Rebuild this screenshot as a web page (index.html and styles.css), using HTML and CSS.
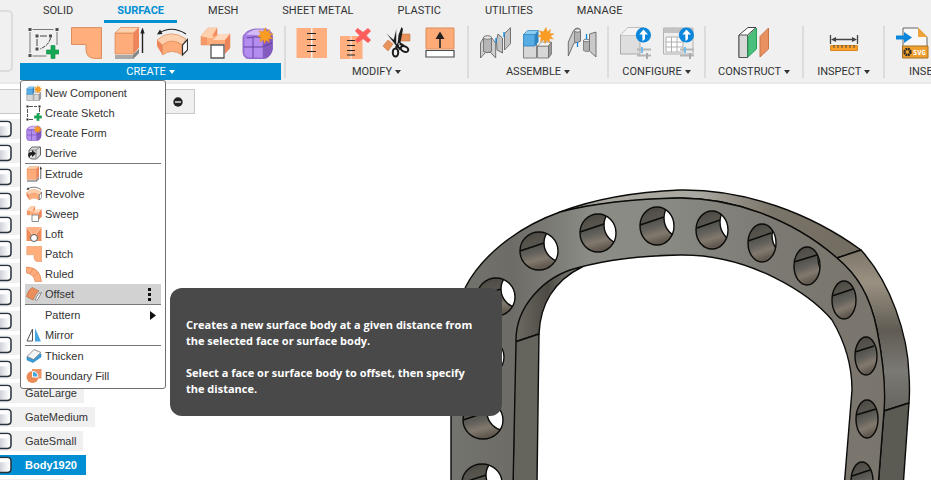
FILE: index.html
```html
<!DOCTYPE html>
<html lang="en">
<head>
<meta charset="utf-8">
<title>Surface workspace</title>
<link rel="stylesheet" href="styles.css">
</head>
<body>
<svg class="defs" aria-hidden="true">
  <symbol id="star" viewBox="0 0 16 16"><path fill="#fa9c22" stroke="#e58a17" stroke-width=".4" d="M8 0l1.3 4.4L12.6 2l-1 4 4.4.3L12.4 8.600l3 3-4.200-.5.6 4.200L8.800 12.600 7 16l-1-3.800-3.700 2 1-4.100L0 8.600l3.400-1.700L1.300 3.300l4.200 1z"/></symbol>
  <symbol id="plus" viewBox="0 0 14 14"><path fill="#17a855" stroke="#0c8c41" stroke-width=".6" d="M5 .5h4v4.500h4.500v4H9v4.500H5V9H.5V5H5z"/></symbol>
  <symbol id="sketch" viewBox="0 0 32 32">
    <path d="M5.500 2.500h21M3 5v21M30 5v13M5.500 29h14" stroke="#777" stroke-width="1" fill="none"/>
    <path d="M1.500 1h3v3h-3zM28.500 1h3v3h-3zM1.500 27h3v3h-3zM8.500 7.500h3v3h-3zM22 7.500h3v3h-3zM8.500 20.500h3v3h-3z" fill="#4c4c4c"/>
    <path d="M13 9h7M10 12v7" stroke="#444"/>
    <path d="M23.500 11c-1 5-5 9-10.500 11" stroke="#444" fill="none" stroke-dasharray="4 1"/>
    <use href="#plus" x="19" y="18" width="14" height="14"/>
  </symbol>
  <symbol id="sketch-s" viewBox="0 0 16 16">
    <path d="M3 1.500h8M1.500 4v8M13.500 3v6M3 14.500h4" stroke="#555" stroke-dasharray="4 1" fill="none"/>
    <path d="M.5.500h2v2h-2zM12.500.500h2v2h-2zM.5 13.500h2v2h-2z" fill="#222"/>
    <use href="#plus" x="8" y="8" width="8" height="8"/>
  </symbol>
  <symbol id="patch" viewBox="0 0 32 32"><path d="M1.500.600h30v30.800H24.500q-8.500-.5-8.500-9V17.500H1.500z" fill="#ffae7c" stroke="#dc8f60"/></symbol>
  <symbol id="extrude" viewBox="0 0 32 32">
    <path d="M2 28h18l6-6v4l-6 6H2z" fill="#a9a9a9"/><path d="M20 28l6-6v4l-6 6z" fill="#858585"/>
    <path d="M2 6h18.500v21H2z" fill="#ffac7b" stroke="#d78554" stroke-width=".7"/>
    <path d="M2 6L7.500.500H26L20.500 6z" fill="#ffd0ad" stroke="#d78554" stroke-width=".7"/>
    <path d="M20.500 6L26 .5v20L20.500 27z" fill="#ee845a"/>
    <path d="M29.500 26V3" stroke="#222" stroke-width="1.400"/><path d="M29.500 .5l-2.200 6h4.400z" fill="#222"/>
  </symbol>
  <symbol id="revolve" viewBox="0 0 32 32">
    <path d="M1 13Q14 1 30 12l-3 6Q16 11 6.500 18z" fill="#ffd0ad" stroke="#d78554" stroke-width=".6"/>
    <path d="M1 13v6l5.500 9V18z" fill="#ee845a"/>
    <path d="M6.500 18Q16 10 26 18v10Q16 21 6.500 28z" fill="#ffac7b" stroke="#d78554" stroke-width=".6"/>
    <path d="M26.500 18l5-5.500V23l-5 5z" fill="#fff" stroke="#333" stroke-width="1.200"/>
    <path d="M3 6Q16-2 30 7" fill="none" stroke="#222" stroke-width="1.200"/><path d="M1 7.500l3-5 2.500 4.500z" fill="#222"/>
  </symbol>
  <symbol id="sweep" viewBox="0 0 32 32">
    <path d="M2 9L9 1h9v7h7l6-1v14l-5 5V17H14V18H2z" fill="#ffac7b" stroke="#e39a6e" stroke-width=".6"/>
    <path d="M2 9L9 1h9l-5 7 2 3H8z" fill="#ffd0ad"/><path d="M14 13l6-6h11l-5 6z" fill="#ffd9bd"/>
    <path d="M26 13l5-6v14l-5 6z" fill="#ee845a"/><path d="M18 1v6l-4 3z" fill="#ee845a"/><path d="M2 10h6v8H2z" fill="#ef9160" opacity=".7"/>
    <path d="M12 18h13v13H12z" fill="#fff" stroke="#555" stroke-width="1.300"/>
  </symbol>
  <symbol id="form" viewBox="0 0 32 32">
    <path d="M1 11C1 7 6 3 13 2h10c6 1 8 5 7.500 11v9c-1 5-4 9-8 9.500H8C3 32 1 29 1 24z" fill="#a57de2" stroke="#7c55bd" stroke-width=".8"/>
    <path d="M4 8q5-5 10-5.500h8l-3 6q-8-1-15-.5z" fill="#d3bbf5"/><path d="M3 12q7-2 17-2v20H7q-4-1-4-5z" fill="#b48df0"/>
    <path d="M23 10l7-2v16q-2 6-7 7z" fill="#835abf"/><path d="M2 20h18l10-4M11 11v20M22 10v21M5 11q8-2 17-.5" stroke="#5e3899" stroke-width=".9" fill="none"/>
    <use href="#star" x="15.500" y="0" width="16" height="17"/>
  </symbol>
  <symbol id="stitch" viewBox="0 0 32 32"><path d="M.5 1h14.500v30H.5zM16.500 1H31v30H16.500z" fill="#ffae80"/><path d="M11 6.500h9M11 12.500h9M11 18.500h9M11 24.500h9" stroke="#222" stroke-width="1.200"/></symbol>
  <symbol id="unstitch" viewBox="0 0 32 32"><path d="M1 9h10.500v23H1zM12.500 9h11v23h-11z" fill="#ffae80"/><path d="M8 13.500h8M8 18.500h8M8 23.500h8M8 28h8" stroke="#222" stroke-width="1.200"/><path d="M18.500 1L24 5l5-4 3 3-4.500 4.500L32 13l-3 3-5-4-5.500 4-2.500-3 4.500-4.500L16 4z" fill="#fc5e5e"/></symbol>
  <symbol id="trim" viewBox="0 0 32 32">
    <path d="M19 7h9v7h-9zM6 13l5 4-5 7-5-5z" fill="#e8925c" stroke="#c97844" stroke-width=".6"/>
    <path d="M14.500.500v16l5 5-2 2L3.500 5.500l8 7z" fill="#1d1d1d" stroke="#fff" stroke-width=".5"/><path d="M15.500 18L16.500 8l3-8 1.500 2-3 16z" fill="#1d1d1d"/>
    <ellipse cx="13.500" cy="25.500" rx="2.700" ry="4" fill="none" stroke="#1d1d1d" stroke-width="2"/><ellipse cx="22.500" cy="22" rx="4" ry="2.700" fill="none" stroke="#1d1d1d" stroke-width="2" transform="rotate(25 22.500 22)"/>
    <path d="M14 21l3-5 5 3" stroke="#1d1d1d" stroke-width="2.500" fill="none"/><circle cx="17" cy="17" r=".8" fill="#fff"/>
  </symbol>
  <symbol id="extend" viewBox="0 0 32 32"><path d="M1 1h28v21H1z" fill="#ffab77" stroke="#dc8d5c"/><path d="M1 23.500h28V30H1z" fill="#fff" stroke="#4a4a4a" stroke-width="1.200"/><path d="M15 21V9" stroke="#222" stroke-width="1.600"/><path d="M15 4.500L10.500 12h9z" fill="#222"/></symbol>
  <symbol id="parts" viewBox="0 0 32 32">
    <path d="M25.500 6.500L31.500.700v16L25.500 23z" fill="#c3c3c3" stroke="#666" stroke-width=".9"/>
    <path d="M17.500 13l1.500-6 4.500 4v15l-5.500-3z" fill="#c3c3c3" stroke="#666" stroke-width=".9"/>
    <path d="M1.500 31V16L5 10q3.500-2 7 0l4.700 6v15l-5-5.500H6.500z" fill="#cfcfcf" stroke="#666" stroke-width=".9"/>
    <path d="M4.500 10.500h8v14q-4 2.500-8 0z" fill="#b5b5b5" stroke="#666" stroke-width=".8"/><ellipse cx="8.500" cy="10.500" rx="4" ry="1.800" fill="#e6e6e6" stroke="#666" stroke-width=".8"/>
    <path d="M17 11v5M25 5v5" stroke="#0989dd" stroke-width="1.300"/>
  </symbol>
  <symbol id="component" viewBox="0 0 32 32">
    <path d="M1.500 17h13v14h-13zM15.500 19h11v12h-11z" fill="#d7d7d7" stroke="#777" stroke-width=".9"/><path d="M15.500 19l4-4h10l-3 4z" fill="#f4f4f4" stroke="#777" stroke-width=".7"/><path d="M26.500 19l3-4v12l-3 4z" fill="#999" stroke="#666" stroke-width=".7"/>
    <path d="M1.500 7.500h11.500V19H1.500z" fill="#58ace4" stroke="#2c7fb9" stroke-width=".8"/><path d="M1.500 7.500L5.500 3.500h11L13 7.500z" fill="#8bcdf3" stroke="#2c7fb9" stroke-width=".7"/><path d="M13 7.500l3.500-4V15L13 19z" fill="#2d84bf"/>
    <use href="#star" x="16" y="0" width="16" height="17"/>
  </symbol>
  <symbol id="joint" viewBox="0 0 32 32">
    <path d="M3.300 29V15L8 4.500q2-3.500 4.500-3.500 3 .5 3 3v10l-4 1.500L9 16z" fill="#c9c9c9" stroke="#666" stroke-width=".9"/>
    <path d="M9.500 4v11q3 1.500 6-1V4z" fill="#b1b1b1" stroke="#666" stroke-width=".7"/><ellipse cx="12.500" cy="3.500" rx="3" ry="1.700" fill="#e8e8e8" stroke="#666" stroke-width=".8"/>
    <path d="M24.500 7L31 5v25l-6.500-6z" fill="#c9c9c9" stroke="#666" stroke-width=".9"/>
    <path d="M18.500 13.500h6V24q-3 1.500-6-.5z" fill="#b1b1b1" stroke="#666" stroke-width=".7"/><ellipse cx="21.500" cy="13.500" rx="3" ry="1.300" fill="#e8e8e8" stroke="#666" stroke-width=".8"/>
    <path d="M12.500 15v5M21.500 7v5.500" stroke="#0989dd" stroke-width="1.300"/>
  </symbol>
  <symbol id="badge" viewBox="0 0 32 32"><path d="M18 22.500h14M18 28.500h14" stroke="#b4b4b4" stroke-width="2"/><path d="M23 20v6" stroke="#74bdea" stroke-width="2"/><path d="M28 26v6" stroke="#aaa" stroke-width="2"/><circle cx="24.400" cy="8" r="7.600" fill="#0a86dc"/><path d="M24.500 2.500l4.500 5h-3V12q-1 1.800-3 1.800 1-2 .3-3.300v-3h-3z" fill="#fff"/></symbol>
  <symbol id="config" viewBox="0 0 32 32"><path d="M1.500 8L9 .8h16L21 8v19H1.500z" fill="#dedede" stroke="#aaa"/><path d="M1.500 8H21L25 1" fill="none" stroke="#aaa" stroke-width=".8"/><path d="M2 8L9 1h15l-3 7z" fill="#f3f3f3"/><use href="#badge"/></symbol>
  <symbol id="conftable" viewBox="0 0 32 32"><path d="M1.500 1H31v26H1.500z" fill="#eee" stroke="#b1b1b1"/><path d="M1.500 1H31v5H1.500z" fill="#c2c2c2"/><path d="M4 10h17v15H4zM4 15h17M4 20h17M9.500 10v15M15 10v15" fill="#fff" stroke="#b1b1b1"/><use href="#badge"/></symbol>
  <symbol id="plane" viewBox="0 0 32 32"><path d="M1 8L10 .5h8L9.500 8v22.500H1z" fill="#fff" stroke="#444"/><path d="M1 8h8.500v22.500H1z" fill="#d9d9d9" stroke="#555"/><path d="M10 9.500L18.500 1v21L10 30z" fill="#4bc07d" stroke="#279f59"/><path d="M22 9.500L30.500 1v21L22 30z" fill="#e9915f" stroke="#c97343"/></symbol>
  <symbol id="measure" viewBox="0 0 32 32"><path d="M2.500 8v9M29.500 8v9M5 12.500h22" stroke="#444" stroke-width="1.300"/><path d="M3 12.500l5-2.500v5zM29 12.500L24 10v5z" fill="#444"/><path d="M2.500 18.500h27v5h-27z" fill="#fca22a" stroke="#d98a1d"/><path d="M6 18v3M10 18v3M14 18v3M18 18v3M22 18v3M26 18v3" stroke="#444"/></symbol>
  <symbol id="derive" viewBox="0 0 16 16"><path d="M3 5l3-3h8.500v8l-4 4H6q-2 0-3-2z" fill="#ddd" stroke="#666"/><path d="M10 5v8M3 5h7l4-3" stroke="#888" fill="none"/><path d="M2 10q0-3 4-3V5l4 3.500L6 12v-2q-2 0-3 3z" fill="#222"/></symbol>
  <symbol id="loft" viewBox="0 0 16 16"><path d="M.5 1h15v14h-15z" fill="#f08b5a"/><path d="M.5 1h15L10 8H6z" fill="#ffb184"/><path d="M.5 1L6 8l-2 6M15.500 1L10 8l2 6" stroke="#fff2e8" fill="none" stroke-width=".6"/><circle cx="8" cy="12" r="3.500" fill="#fff" stroke="#555"/></symbol>
  <symbol id="ruled" viewBox="0 0 16 16"><path d="M.5 1Q14 1 15.500 15.500H9Q8 8 .5 7z" fill="#ffab7a" stroke="#dc8958" stroke-width=".7"/><path d="M7 2.500L4 8M12 6.500L7 10.500" stroke="#dc8958" stroke-width=".7"/></symbol>
  <symbol id="offset" viewBox="0 0 16 16"><path d="M9 14l2-4q1-3 4.500-3.500L12 13q-1 2-3 1z" fill="#fff" stroke="#888"/><path d="M.5 10.500Q2 4 6 1.500l7 3.500q-4 3-6 9z" fill="#e98e5c" stroke="#b56d43" stroke-width=".7"/></symbol>
  <symbol id="mirror" viewBox="0 0 16 16"><path d="M6.500 2v12H1z" fill="#fff" stroke="#555"/><path d="M9 1l6 13.500H9z" fill="#46a6df"/></symbol>
  <symbol id="thicken" viewBox="0 0 16 16"><path d="M1 9l6-4 8 1v3l-8 5.500-6-2.500z" fill="#3c9ddb" stroke="#207cb6" stroke-width=".6"/><path d="M1 8.500l7-7 7 3-7.500 7z" fill="#f4f4f4" stroke="#777" stroke-width=".8"/></symbol>
  <symbol id="fill" viewBox="0 0 16 16"><path d="M6 1h9.500v9.500H6z" fill="#ed9566"/><circle cx="6.500" cy="9" r="6" fill="#e98a57"/><path d="M6.500 3.500a5 5 0 0 1 5.500 5.500H6.500z" fill="#46a6df" stroke="#fff"/></symbol>
  <symbol id="cylinder" viewBox="0 0 16 18"><path d="M0 1.500h11q4 0 4 3.500v8q0 3.500-4 3.500H0z" fill="url(#cyl)" stroke="#26323e" stroke-width="1.500"/><path d="M0 2.300h11q3 0 3 2-1 2-4 2H0z" fill="#fff"/></symbol>
  <linearGradient id="cyl"><stop offset="0" stop-color="#b9bec6"/><stop offset=".6" stop-color="#e9ebee"/><stop offset=".9" stop-color="#fff"/></linearGradient>
</svg>

<header class="ribbon">
  <div class="workspace"></div>
  <div class="ribbon-main">
    <nav class="tabs">
      <a href="#">SOLID</a><a href="#" class="active">SURFACE</a><a href="#">MESH</a><a href="#">SHEET METAL</a><a href="#">PLASTIC</a><a href="#">UTILITIES</a><a href="#">MANAGE</a>
    </nav>
    <div class="groups">
      <section class="group create">
        <div class="tools">
          <button aria-label="Create Sketch"><svg><use href="#sketch"/></svg></button><button aria-label="Patch"><svg><use href="#patch"/></svg></button><button aria-label="Extrude"><svg><use href="#extrude"/></svg></button><button aria-label="Revolve"><svg><use href="#revolve"/></svg></button><button aria-label="Sweep"><svg><use href="#sweep"/></svg></button><button aria-label="Create Form"><svg><use href="#form"/></svg></button>
        </div>
        <button class="label">CREATE</button>
      </section>
      <section class="group">
        <div class="tools">
          <button aria-label="Stitch"><svg><use href="#stitch"/></svg></button><button aria-label="Unstitch"><svg><use href="#unstitch"/></svg></button><button aria-label="Trim"><svg><use href="#trim"/></svg></button><button aria-label="Extend"><svg><use href="#extend"/></svg></button>
        </div>
        <button class="label">MODIFY</button>
      </section>
      <section class="group">
        <div class="tools">
          <button aria-label="Parts"><svg><use href="#parts"/></svg></button><button aria-label="New Component"><svg><use href="#component"/></svg></button><button aria-label="Joint"><svg><use href="#joint"/></svg></button>
        </div>
        <button class="label">ASSEMBLE</button>
      </section>
      <section class="group">
        <div class="tools">
          <button aria-label="Configure"><svg><use href="#config"/></svg></button><button aria-label="Configuration table"><svg><use href="#conftable"/></svg></button>
        </div>
        <button class="label">CONFIGURE</button>
      </section>
      <section class="group single">
        <div class="tools"><button aria-label="Offset Plane"><svg><use href="#plane"/></svg></button></div>
        <button class="label">CONSTRUCT</button>
      </section>
      <section class="group single">
        <div class="tools"><button aria-label="Measure"><svg><use href="#measure"/></svg></button></div>
        <button class="label">INSPECT</button>
      </section>
      <section class="group insert">
        <div class="tools"><button aria-label="Insert SVG"><svg viewBox="0 0 32 32"><path d="M8 19V1h15l9 9v9" fill="#f7f7f7" stroke="#666"/><path d="M23 .5V10h9.500z" fill="#f0a33a"/><path d="M7.500 19H33v12H7.500z" fill="#eda02f" stroke="#a87020"/><circle cx="12.500" cy="25" r="3" fill="none" stroke="#222" stroke-width="2.400" stroke-dasharray="1.700 .66"/><path d="M1 8.500h8V5l8 5.500L9 16v-3.500H1z" fill="#0a86dc"/><text x="18" y="28" class="svg-word">SVG</text></svg></button></div>
        <button class="label">INSERT</button>
      </section>
    </div>
  </div>
</header>

<main class="canvas">
  <svg class="scene" viewBox="0 84 931 396" role="img" aria-label="Curved frame with round holes">
    <defs>
      <linearGradient id="front" gradientUnits="userSpaceOnUse" x1="451" y1="0" x2="884" y2="0"><stop offset="0" stop-color="#74746e"/><stop offset=".14" stop-color="#6d6c67"/><stop offset=".22" stop-color="#797873"/><stop offset=".32" stop-color="#8b8c86"/><stop offset=".5" stop-color="#898a84"/><stop offset=".75" stop-color="#7b7972"/><stop offset="1" stop-color="#7a756c"/></linearGradient>
      <linearGradient id="rim" gradientUnits="userSpaceOnUse" x1="565" y1="0" x2="861" y2="0"><stop offset="0" stop-color="#77736c"/><stop offset=".12" stop-color="#aaa79f"/><stop offset=".45" stop-color="#aaa8a2"/><stop offset=".7" stop-color="#7b7468"/><stop offset="1" stop-color="#716b60"/></linearGradient>
      <linearGradient id="side" gradientUnits="userSpaceOnUse" x1="0" y1="250" x2="0" y2="411"><stop offset="0" stop-color="#7d766a"/><stop offset=".2" stop-color="#9a9182"/><stop offset=".5" stop-color="#605c54"/><stop offset=".75" stop-color="#7b7974"/><stop offset="1" stop-color="#65645e"/></linearGradient>
      <linearGradient id="inner" gradientUnits="userSpaceOnUse" x1="515" y1="0" x2="580" y2="0"><stop offset="0" stop-color="#6e6b63"/><stop offset=".5" stop-color="#4c4a43"/><stop offset="1" stop-color="#8a877f"/></linearGradient>
      <linearGradient id="bore" x1="0" y1="0" x2=".25" y2="1"><stop offset="0" stop-color="#45433e"/><stop offset=".3" stop-color="#56534c"/><stop offset=".45" stop-color="#55554f"/><stop offset=".6" stop-color="#63615b"/><stop offset=".8" stop-color="#82796e"/><stop offset="1" stop-color="#625a50"/></linearGradient>
      <clipPath id="h1"><ellipse cx="539" cy="251" rx="19" ry="19"/></clipPath><clipPath id="h2"><ellipse cx="598" cy="233" rx="18" ry="19"/></clipPath><clipPath id="h3"><ellipse cx="657" cy="226" rx="17" ry="19"/></clipPath><clipPath id="h4"><ellipse cx="712" cy="230" rx="16" ry="19"/></clipPath><clipPath id="h5"><ellipse cx="762" cy="243" rx="14" ry="19"/></clipPath><clipPath id="h6"><ellipse cx="807" cy="266" rx="13" ry="19"/></clipPath><clipPath id="h11"><ellipse cx="496" cy="297" rx="19" ry="19"/></clipPath><clipPath id="h12"><ellipse cx="484" cy="357" rx="20" ry="19"/></clipPath><clipPath id="h13"><ellipse cx="483" cy="420" rx="20" ry="19"/></clipPath><clipPath id="h14"><ellipse cx="482" cy="483" rx="20" ry="19"/></clipPath>
    </defs>
    <g stroke="#0b0b0a" stroke-width="1.400" stroke-linejoin="round">
      <path fill="url(#rim)" d="M560 212Q610 193 680 190C745 189 810 213 861 250L837 258C790 217 730 198 680 198Q610 200 560 212z"/>
      <path fill="url(#side)" d="M861 250C891 283 908 335 909 375Q910 390 909 403L884 411Q886 375 877 330C870 294 856 274 837 258z"/>
      <path fill="#5b5a53" d="M884 411l25-8-6 85h-25z"/>
      <path fill="url(#inner)" d="M582 267C553 281 540 306 539 334L515 342Q513 315 530 297C543 279 562 269 582 267z"/>
      <path fill="#65645d" d="M515 342l24-8-2 150h-24z"/>
      <path fill="url(#front)" fill-rule="evenodd" d="M451 488V390C451 345 455 305 465 288C480 258 515 228 560 212Q610 199 680 198C730 198 790 217 837 258C856 274 870 294 877 330C884 365 886 388 884 411L878 488H844L852 390C852 364 845 342 832 320C810 294 750 254 680 255Q620 256 577 268C545 276 515 306 516 342L513 488z"/>
    </g>
    <g fill="url(#bore)">
      <g clip-path="url(#h1)"><path d="M520 232h38v38h-38z"/><ellipse class="gap" cx="563" cy="243" rx="19" ry="19"/></g><g clip-path="url(#h2)"><path d="M580 214h36v38h-36z"/><ellipse class="gap" cx="622" cy="225" rx="18" ry="19"/></g><g clip-path="url(#h3)"><path d="M640 207h34v38h-34z"/><ellipse class="gap" cx="681" cy="218" rx="17" ry="19"/></g><g clip-path="url(#h4)"><path d="M696 211h32v38h-32z"/><ellipse class="gap" cx="736" cy="222" rx="16" ry="19"/></g><g clip-path="url(#h5)"><path d="M748 224h28v38h-28z"/><ellipse class="gap" cx="786" cy="235" rx="14" ry="19"/></g><g clip-path="url(#h6)"><path d="M794 247h26v38h-26z"/><ellipse class="gap" cx="831" cy="258" rx="13" ry="19"/></g>
      <ellipse cx="844" cy="300" rx="12" ry="19"/><ellipse cx="866" cy="356" rx="11" ry="19"/><ellipse cx="867" cy="419" rx="11" ry="19"/><ellipse cx="862" cy="481" rx="11" ry="19"/>
      <g clip-path="url(#h11)"><path d="M477 278h38v38h-38z"/><ellipse class="gap" cx="520" cy="289" rx="19" ry="19"/></g><g clip-path="url(#h12)"><path d="M464 338h40v38h-40z"/><ellipse class="gap" cx="508" cy="349" rx="20" ry="19"/></g><g clip-path="url(#h13)"><path d="M463 401h40v38h-40z"/><ellipse class="gap" cx="507" cy="412" rx="20" ry="19"/></g><g clip-path="url(#h14)"><path d="M462 464h40v38h-40z"/><ellipse class="gap" cx="506" cy="475" rx="20" ry="19"/></g>
    </g>
    <g fill="none" stroke="#0b0b0a" stroke-width="1.400">
      <ellipse cx="539" cy="251" rx="19" ry="19"/><ellipse cx="598" cy="233" rx="18" ry="19"/><ellipse cx="657" cy="226" rx="17" ry="19"/><ellipse cx="712" cy="230" rx="16" ry="19"/><ellipse cx="762" cy="243" rx="14" ry="19"/><ellipse cx="807" cy="266" rx="13" ry="19"/><ellipse cx="844" cy="300" rx="12" ry="19"/><ellipse cx="866" cy="356" rx="11" ry="19"/><ellipse cx="867" cy="419" rx="11" ry="19"/><ellipse cx="862" cy="481" rx="11" ry="19"/><ellipse cx="496" cy="297" rx="19" ry="19"/><ellipse cx="484" cy="357" rx="20" ry="19"/><ellipse cx="483" cy="420" rx="20" ry="19"/><ellipse cx="482" cy="483" rx="20" ry="19"/>
      <path d="M520 251l24-8M580 232l24-8M640 225l24-8M697 228l23-8M748 241l23-8M794 262l23-7M832 296l21-7M855 352l19-6M856 415l20-6M852 476l18-6M477 297l24-8M463 420l24-8M462 483l24-8"/>
    </g>
  </svg>

  <aside class="browser">
    <div class="browser-head"><button aria-label="Collapse"><svg viewBox="0 0 10 10"><circle cx="5" cy="5" r="4.700" fill="#222"/><path d="M2 5h6" stroke="#fff" stroke-width="1.300"/></svg></button></div>
    <ul>
      <li class="blank"><svg><use href="#cylinder"/></svg></li><li class="blank"><svg><use href="#cylinder"/></svg></li><li class="blank"><svg><use href="#cylinder"/></svg></li><li class="blank"><svg><use href="#cylinder"/></svg></li><li class="blank"><svg><use href="#cylinder"/></svg></li><li class="blank"><svg><use href="#cylinder"/></svg></li><li class="blank"><svg><use href="#cylinder"/></svg></li><li class="blank"><svg><use href="#cylinder"/></svg></li><li class="blank"><svg><use href="#cylinder"/></svg></li><li class="blank"><svg><use href="#cylinder"/></svg></li><li class="blank"><svg><use href="#cylinder"/></svg></li>
      <li><svg><use href="#cylinder"/></svg>GateLarge</li>
      <li><svg><use href="#cylinder"/></svg>GateMedium</li>
      <li><svg><use href="#cylinder"/></svg>GateSmall</li>
      <li class="selected"><svg><use href="#cylinder"/></svg>Body1920</li>
      <li class="tail"></li>
    </ul>
  </aside>
</main>

<div class="menu" role="menu">
  <button role="menuitem"><svg><use href="#component"/></svg>New Component</button>
  <button role="menuitem"><svg><use href="#sketch-s"/></svg>Create Sketch</button>
  <button role="menuitem"><svg><use href="#form"/></svg>Create Form</button>
  <button role="menuitem"><svg><use href="#derive"/></svg>Derive</button>
  <hr>
  <button role="menuitem"><svg><use href="#extrude"/></svg>Extrude</button>
  <button role="menuitem"><svg><use href="#revolve"/></svg>Revolve</button>
  <button role="menuitem"><svg><use href="#sweep"/></svg>Sweep</button>
  <button role="menuitem"><svg><use href="#loft"/></svg>Loft</button>
  <button role="menuitem"><svg><use href="#patch"/></svg>Patch</button>
  <button role="menuitem"><svg><use href="#ruled"/></svg>Ruled</button>
  <button role="menuitem" class="hover"><svg><use href="#offset"/></svg>Offset<svg class="end" viewBox="0 0 16 16"><path d="M7 2h3v3H7zM7 7h3v3H7zM7 12h3v3H7z"/></svg></button>
  <hr>
  <button role="menuitem"><svg></svg>Pattern<svg class="end" viewBox="0 0 16 16"><path d="M9 4l6 4.500L9 13z"/></svg></button>
  <button role="menuitem"><svg><use href="#mirror"/></svg>Mirror</button>
  <hr>
  <button role="menuitem"><svg><use href="#thicken"/></svg>Thicken</button>
  <button role="menuitem"><svg><use href="#fill"/></svg>Boundary Fill</button>
</div>

<div class="tooltip" role="tooltip">
  <p>Creates a new surface body at a given distance from the selected face or surface body.</p>
  <p>Select a face or surface body to offset, then specify the distance.</p>
</div>
</body>
</html>
```

FILE: styles.css
```css
* { box-sizing: border-box; }
body {
  margin: 0;
  min-height: 100vh;
  display: flex;
  flex-direction: column;
  overflow: hidden;
  position: relative;
  background: #fff;
  color: #333;
  font: 11px/20px "Liberation Sans", Arial, sans-serif;
}
button {
  margin: 0;
  padding: 0;
  border: 0;
  background: none;
  color: inherit;
  font: inherit;
}
svg { display: block; }
.defs { position: absolute; width: 0; height: 0; }

/* Ribbon */
.ribbon {
  display: flex;
  height: 84px;
  flex: none;
  background: #f0f0f0;
  overflow: hidden;
  font-family: Roboto, "Liberation Sans", sans-serif;
  border-bottom: 2px solid #e9e9e9;
}
.workspace {
  flex: none;
  width: 13px;
  height: 62px;
  margin: 10px 7px 0 0;
  border: 2px solid #dcdcdc;
  border-left: 0;
  border-radius: 0 5px 5px 0;
}
.ribbon-main { flex: 1; min-width: 0; }
.tabs { display: flex; gap: 18px; padding-left: 10px; }
.tabs a {
  height: 23px;
  padding: 1px 13px 0;
  color: #333;
  text-decoration: none;
  white-space: nowrap;
}
.tabs .active { color: #008fd3; font-weight: 700; border-bottom: 3px solid #008fd3; }
.groups { display: flex; padding-top: 3px; }
.group {
  flex: none;
  height: 52px;
  padding: 0 10px;
  border-right: 2px solid #dcdcdc;
}
.tools { display: flex; justify-content: center; gap: 11px; height: 33px; padding-top: 1px; }
.tools button, .tools svg { width: 32px; height: 32px; overflow: visible; }
.label {
  display: flex;
  align-items: center;
  justify-content: center;
  gap: 3px;
  width: 100%;
  height: 17px;
  margin-top: 4px;
  white-space: nowrap;
}
.label::after {
  content: "";
  border: 3px solid transparent;
  border-top: 4px solid currentColor;
  border-bottom: 0;
}
.create { padding: 0; width: 266px; }
.create .tools, .create .label { width: 261px; }
.create .label { background: #008fd3; color: #fff; }
.single { padding: 0 12px; }
.single + .single { padding: 0 13px; }
.insert { border: 0; width: 93px; }
.insert .tools { justify-content: flex-start; }
.svg-word { font: 700 7px "DejaVu Sans Mono", monospace; fill: #fff; }

/* Canvas and browser tree */
.canvas { flex: 1; position: relative; min-height: 396px; }
.scene { position: absolute; inset: 0; width: 100%; }
.gap { fill: #fff; stroke: #0b0b0a; stroke-width: 1.4px; }
.browser { position: relative; width: 195px; padding-top: 5px; }
.browser-head {
  height: 25px;
  padding-right: 11px;
  display: flex;
  align-items: center;
  justify-content: flex-end;
  background: #f0f0f0;
  border: 1px solid #c8c8c8;
  border-left: 0;
}
.browser-head svg { width: 10px; height: 10px; }
.browser ul {
  list-style: none;
  margin: 5px 0 0;
  padding: 0;
  display: flex;
  flex-direction: column;
  align-items: flex-start;
  gap: 4px;
  height: 361px;
  overflow: hidden;
}
.browser li {
  flex: none;
  height: 20px;
  display: flex;
  align-items: center;
  gap: 13px;
  padding-right: 7px;
  background: #f0f0f0;
}
.browser li svg { width: 16px; height: 18px; margin-left: -4px; }
.browser .blank { width: 94px; }
.browser .tail { width: 64px; }
.browser .selected { padding-right: 9px; background: #008fd3; color: #fff; font-weight: 700; }

/* Create menu */
.menu {
  position: absolute;
  left: 20px;
  top: 80px;
  width: 146px;
  padding: 2px 4px;
  background: #fff;
  border: 1px solid #6f6f6f;
  border-radius: 3px;
}
.menu button {
  display: flex;
  align-items: center;
  gap: 3px;
  width: 100%;
  height: 20px;
  padding-left: 1px;
}
.menu svg { width: 16px; height: 16px; flex: none; }
.menu .end { margin-left: auto; margin-right: 4px; fill: #111; }
.menu .hover { background: #d2d2d2; }
.menu hr { margin: 0; border: 0; height: 1px; background: #777; }

/* Tooltip */
.tooltip {
  position: absolute;
  left: 170px;
  top: 288px;
  width: 332px;
  padding: 29px 16px 19px;
  border-radius: 12px;
  background: #494949;
  color: #fff;
  font: 700 11px/16px "Open Sans", "Noto Sans", sans-serif;
}
.tooltip p { margin: 0 0 16px; }
.tooltip p:last-child { margin: 0; }
```
